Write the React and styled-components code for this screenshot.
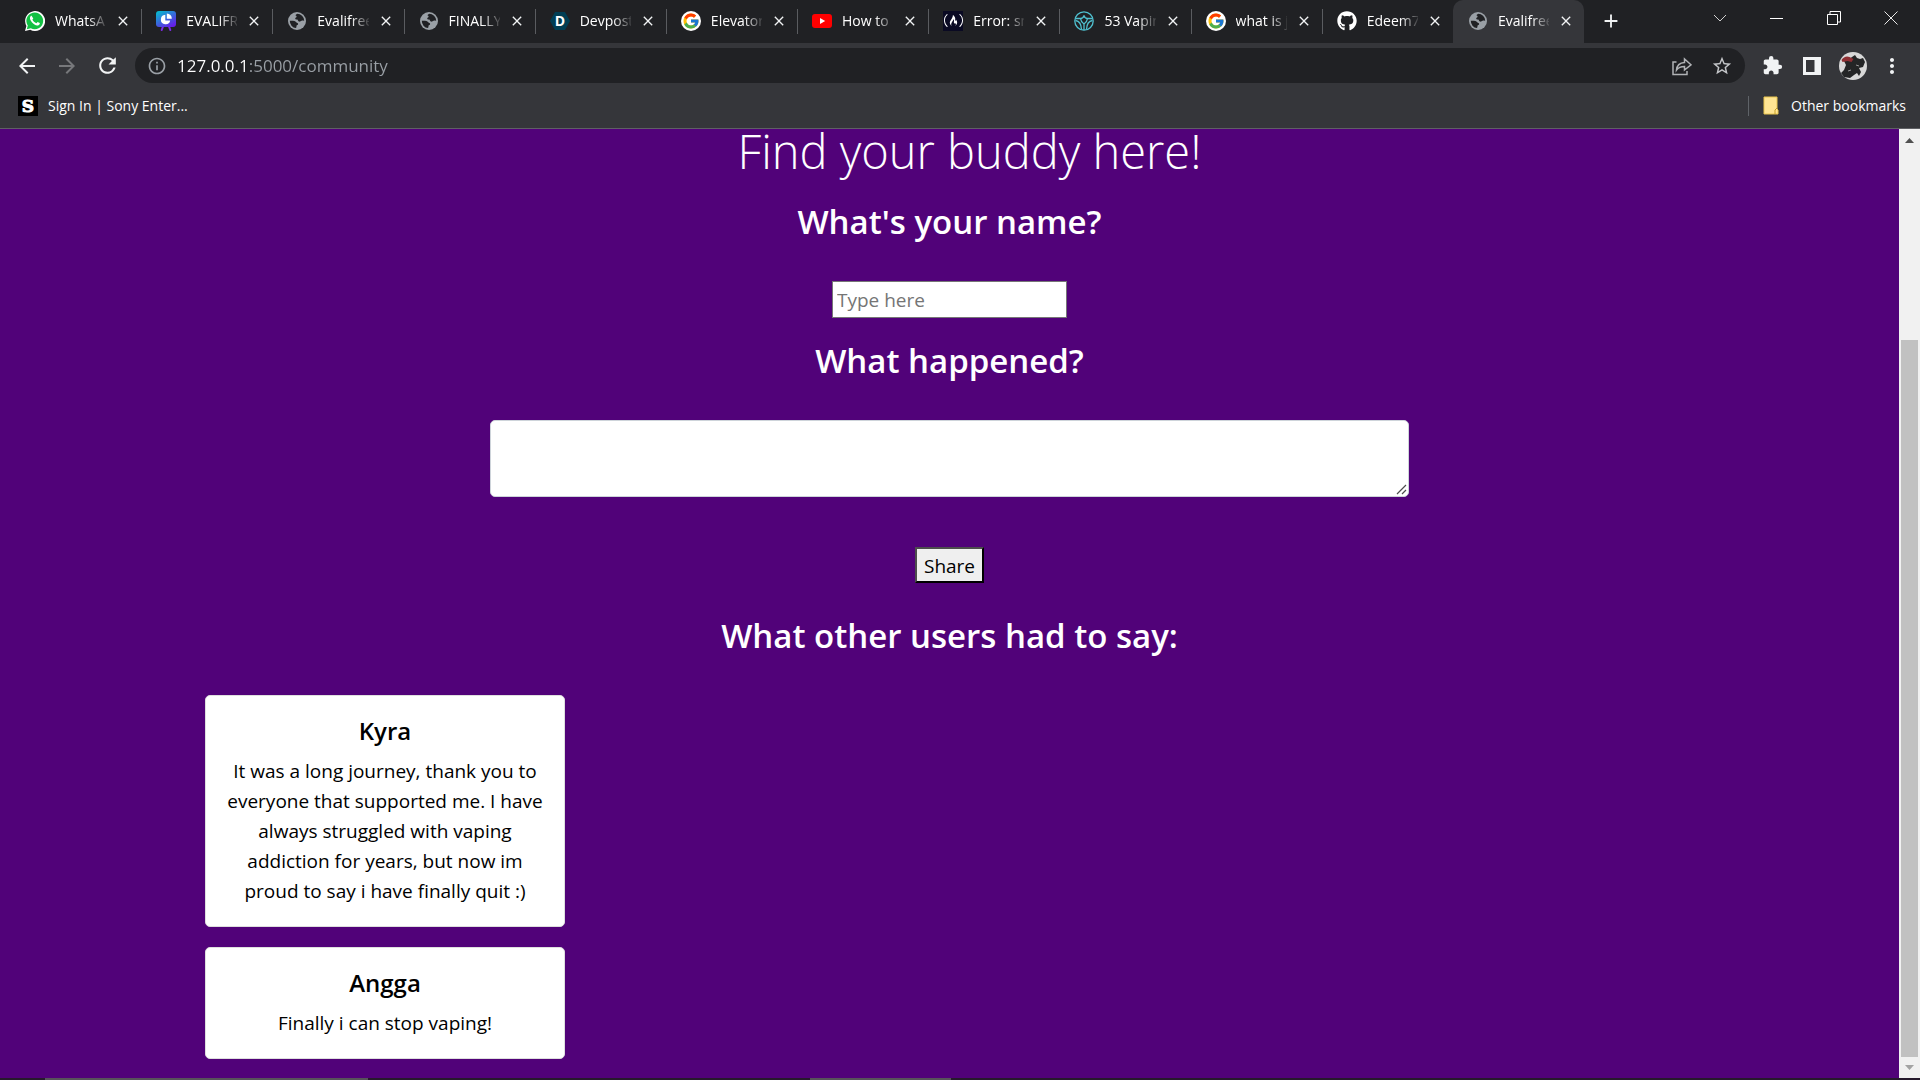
import React, { useState } from "react";
import styled, { createGlobalStyle } from "styled-components";
import {
  MdAdd,
  MdArrowBack,
  MdArrowForward,
  MdClose,
  MdExtension,
  MdInfoOutline,
  MdMoreVert,
  MdRefresh,
  MdStarOutline,
} from "react-icons/md";
import { FcGoogle } from "react-icons/fc";
import { FaGithub } from "react-icons/fa";
import { SiFreecodecamp } from "react-icons/si";

const GlobalStyle = createGlobalStyle`
  * {
    box-sizing: border-box;
  }
  body {
    margin: 0;
    background-color: #510279;
    font-family: "Open Sans", "Noto Sans", sans-serif;
  }
  button, input, textarea {
    font-family: inherit;
  }
`;
const Window = styled.div`
  display: flex;
  flex-direction: column;
  min-height: 100vh;
`;
const IconButton = styled.button`
  display: flex;
  align-items: center;
  justify-content: center;
  flex: none;
  width: ${(props) => props.$width || 40}px;
  height: ${(props) => props.$height || 34}px;
  padding: 0;
  border: none;
  background: none;
  color: ${(props) => props.$color || "#f1f3f4"};
`;

/* tab strip */
const TabStrip = styled.div`
  display: flex;
  height: 43px;
  padding-left: 10px;
  background-color: #202124;
`;
const TabList = styled.div`
  display: flex;
  flex: 1;
  min-width: 0;
`;
const Tab = styled.div`
  position: relative;
  display: flex;
  align-items: center;
  flex: 1;
  min-width: 0;
  padding: 0 1px 2px 15px;
  border-radius: 10px 10px 0 0;
  background-color: ${(props) => (props.$active ? "#35363a" : "transparent")};

  &::after {
    content: "";
    position: absolute;
    right: -1px;
    top: 9px;
    width: 1px;
    height: 25px;
    background-color: ${(props) => (props.$divider ? "#5a5c60" : "transparent")};
  }
`;
const TabButton = styled.button`
  display: flex;
  align-items: center;
  gap: 10px;
  flex: 1;
  min-width: 0;
  padding: 0;
  border: none;
  background: none;
  color: #fff;
`;
const TabTitle = styled.span`
  flex: 1;
  min-width: 0;
  overflow: hidden;
  white-space: nowrap;
  text-align: left;
  font-size: 14px;
  line-height: 20px;
  mask-image: linear-gradient(to right, #000 65%, transparent 105%);
`;
const Favicon = styled.svg`
  flex: none;
  width: 20px;
  height: 20px;
`;
const RoundIcon = styled.span`
  display: flex;
  align-items: center;
  justify-content: center;
  flex: none;
  width: 20px;
  height: 20px;
  border-radius: ${(props) => props.$radius || "50%"};
  background-color: ${(props) => props.$background || "transparent"};
  color: #fff;
`;
const WindowControls = styled.div`
  display: flex;
  justify-content: space-between;
  width: 336px;
`;
const WindowButtons = styled.div`
  display: flex;
  margin-top: 1px;
`;

/* toolbar and bookmarks */
const Toolbar = styled.div`
  display: flex;
  align-items: center;
  height: 45px;
  padding: 0 9px 0 7px;
  background-color: #35363a;
`;
const AddressBar = styled.div`
  display: flex;
  align-items: center;
  flex: 1;
  height: 35px;
  margin: 0 7px 0 8px;
  padding: 0 3px 0 12px;
  border-radius: 18px;
  background-color: #202124;
  color: #9aa0a6;
`;
const Address = styled.input`
  flex: 1;
  min-width: 0;
  margin-left: 10px;
  padding: 0;
  border: none;
  outline: none;
  background: linear-gradient(to right, #fff 70px, #9aa0a6 70px);
  background-clip: text;
  color: transparent;
  font-size: 17px;
  line-height: 28px;
`;
const BookmarkBar = styled.nav`
  display: flex;
  align-items: center;
  justify-content: space-between;
  height: 41px;
  padding: 0 14px 5px 18px;
  border-bottom: 1px solid #5f6064;
  background-color: #35363a;
`;
const Bookmark = styled.a`
  display: flex;
  align-items: center;
  gap: ${(props) => props.$gap || 10}px;
  color: #fff;
  font-size: 14px;
  line-height: 20px;
  text-decoration: none;
`;
const OtherBookmarks = styled.div`
  display: flex;
  padding-left: 14px;
  border-left: 1px solid #5f6368;
`;

/* page */
const Viewport = styled.div`
  display: flex;
  flex: 1;
`;
const Page = styled.main`
  flex: 1;
  min-width: 0;
  padding-bottom: 19px;
  background-color: #510279;
  color: #fff;
  text-align: center;
`;
const Title = styled.h1`
  margin: 0 0 28px;
  padding-left: 40px;
  font-size: 47px;
  font-weight: 300;
  line-height: 44px;
`;
const Question = styled.h2`
  margin: 0 0 38px;
  font-size: 33px;
  font-weight: 600;
  line-height: 42px;
`;
const Form = styled.form`
  display: flex;
  flex-direction: column;
  align-items: center;
`;
const NameInput = styled.input`
  width: 235px;
  height: 37px;
  margin-bottom: 22px;
  padding: 1px 4px;
  border: 1px solid #767676;
  background-color: #fff;
  font-size: 19px;

  &::placeholder {
    color: #757575;
  }
`;
const StoryField = styled.div`
  position: relative;
  width: 919px;
  max-width: 90%;
  margin-bottom: 50px;
`;
const Story = styled.textarea`
  display: block;
  width: 100%;
  height: 77px;
  padding: 8px 15px;
  border: 1px solid #ced4da;
  border-radius: 5px;
  background-color: #fff;
  font-size: 19px;
  resize: vertical;

  &::-webkit-resizer {
    display: none;
  }
`;
const Grip = styled.svg`
  position: absolute;
  right: 2px;
  bottom: 2px;
  pointer-events: none;
`;
const ShareButton = styled.button`
  height: 36px;
  margin-bottom: 32px;
  padding: 1px 7px 0;
  border: 2px solid;
  border-color: #4d4d4d #000 #000 #4d4d4d;
  background-color: #efefef;
  color: #000;
  font-size: 19px;
  line-height: 30px;
`;
const Posts = styled.section`
  display: flex;
  flex-direction: column;
  gap: 20px;
  max-width: 1489px;
  margin: 0 auto;
`;
const Card = styled.article`
  width: 360px;
  padding: 20px;
  border: 1px solid #dfdfdf;
  border-radius: 5px;
  background-color: #fff;
  color: #000;
`;
const Author = styled.h3`
  margin: 0 0 10px;
  font-size: 24px;
  font-weight: 600;
  line-height: 30px;
`;
const Message = styled.p`
  margin: 0;
  font-size: 19px;
  line-height: 30px;
`;

const Scrollbar = styled.div`
  display: flex;
  flex-direction: column;
  align-items: center;
  width: 21px;
  background-color: #f1f1f1;
`;
const ScrollArrow = styled.svg`
  flex: none;
  width: 21px;
  height: 21px;
`;
const ScrollGap = styled.div`
  flex: 190;
`;
const ScrollThumb = styled.div`
  flex: 718;
  width: 17px;
  background-color: #c1c1c1;
`;
const Taskbar = styled.footer`
  display: flex;
  gap: 442px;
  height: 2px;
  padding-left: 45px;
  background-color: #261a2c;
`;
const TaskItem = styled.div`
  width: ${(props) => props.$width}px;
  background-color: #57535a;
`;

const GlobeIcon = () => (
  <Favicon viewBox="0 0 20 20">
    <circle cx="10" cy="10" r="9" fill="#9aa0a6" />
    <path
      d="M10.2 2.8c-.9.5-1.700 1-1.500 1.700.2.700 1 .5.9 1.300-.1.800-1.400.7-1.400 1.700 0 .9.7 1 1.500 1 .9 0 1.200.5 1.300 1.100.2.900 1.100 1.200 2 1 .9-.3 1.200-1.100 2.200-1.100.7 0 1.300.3 2 .2a7.200 7.200 0 0 0-7-6.900z"
      fill="#202124"
    />
    <path
      d="M2.800 9.800c1.500-.1 3.500 0 4.700.3 1.300.4 1.400 1.300 2.300 1.600.9.400 1.500.6 1.300 1.500-.2.8-1.200.7-1.500 1.400-.3.800.1 1.600-.6 2.500A7.200 7.200 0 0 1 2.800 9.800z"
      fill="#202124"
    />
  </Favicon>
);
const WhatsappIcon = () => (
  <Favicon viewBox="0 0 20 20">
    <path d="M0 20l1.400-5.100A10 10 0 1 1 5.200 18.700z" fill="#fff" />
    <path d="M1.800 18.200l1-3.600a8.400 8.400 0 1 1 3 2.700z" fill="#12c143" />
    <path
      d="M6.900 5.200c-.3-.5-.9-.4-1.300.1-1.300 1.500-.6 3.600 1.300 5.900 2 2.400 4.600 4 6.600 3 1-.5 1.500-1.400 1.300-2.200l-2.200-1.100-1.200 1.300c-1.900-.7-3.200-1.900-4-3.600l.9-1.200z"
      fill="#fff"
    />
  </Favicon>
);
const PresentationIcon = () => (
  <Favicon viewBox="0 0 20 20">
    <defs>
      <linearGradient id="board" x1="0" y1="0" x2="0.7" y2="1">
        <stop offset="0" stopColor="#00c4cc" />
        <stop offset="1" stopColor="#6420e8" />
      </linearGradient>
    </defs>
    <path d="M7 15.500L5.700 19M13 15.500l1.300 3.500" stroke="#7d2ae8" strokeWidth="2" strokeLinecap="round" />
    <rect width="20" height="16" rx="3" fill="url(#board)" />
    <path d="M9.300 3.800a4.700 4.700 0 1 0 4.900 5.600H9.300z" fill="#fff" />
    <path d="M10.800 2.400v5.400h5a5 5 0 0 0-5-5.400z" fill="#fff" />
  </Favicon>
);
const DevpostIcon = () => (
  <Favicon viewBox="0 0 20 20">
    <path d="M5 1h10l5 9-5 9H5l-5-9z" fill="#003e54" />
    <text x="10" y="15" textAnchor="middle" fontSize="14" fontWeight="700" fill="#fff">
      D
    </text>
  </Favicon>
);
const GoogleIcon = () => (
  <RoundIcon $background="#fff">
    <FcGoogle size={18} />
  </RoundIcon>
);
const YoutubeIcon = () => (
  <Favicon viewBox="0 0 20 20">
    <rect y="3" width="20" height="14" rx="3" fill="#f00" />
    <path d="M8 7l5.200 3L8 13z" fill="#fff" />
  </Favicon>
);
const FreeCodeCampIcon = () => (
  <RoundIcon $background="#0a0a23" $radius="0">
    <SiFreecodecamp size={19} />
  </RoundIcon>
);
const WheelIcon = () => (
  <Favicon viewBox="0 0 20 20" fill="none" stroke="#4fc0cf" strokeWidth="1.300">
    <circle cx="10" cy="10" r="9.200" />
    <path d="M1.200 7.500h5.300c1.800 0 3-1 3.500-3 .5 2 1.700 3 3.500 3h5.300" />
    <path d="M6.500 7.500c.3 2.500 1.500 4.200 3.500 5.500 2-1.300 3.200-3 3.500-5.500M10 13v6" />
    <path d="M1.500 9.500c3.500.5 5.800 3.500 6 9M18.500 9.500c-3.500.5-5.800 3.500-6 9" />
  </Favicon>
);
const GithubIcon = () => (
  <RoundIcon>
    <FaGithub size={20} />
  </RoundIcon>
);

const tabs = [
  { title: "WhatsA", Icon: WhatsappIcon },
  { title: "EVALIFR", Icon: PresentationIcon },
  { title: "Evalifree", Icon: GlobeIcon },
  { title: "FINALLY", Icon: GlobeIcon },
  { title: "Devpost", Icon: DevpostIcon },
  { title: "Elevator", Icon: GoogleIcon },
  { title: "How to", Icon: YoutubeIcon },
  { title: "Error: sm", Icon: FreeCodeCampIcon },
  { title: "53 Vapin", Icon: WheelIcon },
  { title: "what is j", Icon: GoogleIcon },
  { title: "Edeem7", Icon: GithubIcon },
  { title: "Evalifree", Icon: GlobeIcon },
];

const initialPosts = [
  {
    author: "Kyra",
    message:
      "It was a long journey, thank you to everyone that supported me. I have always struggled with vaping addiction for years, but now im proud to say i have finally quit :)",
  },
  { author: "Angga", message: "Finally i can stop vaping!" },
];

const BrowserTabs = () => {
  const active = tabs.length - 1;

  return (
    <TabStrip>
      <TabList>
        {tabs.map(({ title, Icon }, index) => (
          <Tab key={index} $active={index === active} $divider={index < active - 1}>
            <TabButton>
              <Icon />
              <TabTitle>{title}</TabTitle>
            </TabButton>
            <IconButton $width={34} aria-label="Close tab">
              <MdClose size={16} />
            </IconButton>
          </Tab>
        ))}
      </TabList>
      <WindowControls>
        <IconButton $width={54} $height={42} aria-label="New tab">
          <MdAdd size={22} />
        </IconButton>
        <WindowButtons>
          <IconButton $width={57} aria-label="Search tabs">
            <svg width="14" height="14" fill="none" stroke="#d0d0d0">
              <path d="M1 4l6 6 6-6" />
            </svg>
          </IconButton>
          <IconButton $width={57} aria-label="Minimize">
            <svg width="14" height="14" fill="none" stroke="#fff">
              <path d="M0 7.500h13" />
            </svg>
          </IconButton>
          <IconButton $width={57} aria-label="Restore">
            <svg width="14" height="14" fill="none" stroke="#fff">
              <path d="M.5 3.500h10v10H.5zM3 3V.5h10.500V11H11" />
            </svg>
          </IconButton>
          <IconButton $width={58} aria-label="Close">
            <svg width="14" height="14" fill="none" stroke="#e8e8e8">
              <path d="M.5.5l13 13M13.500.5l-13 13" />
            </svg>
          </IconButton>
        </WindowButtons>
      </WindowControls>
    </TabStrip>
  );
};

const BrowserToolbar = () => (
  <Toolbar>
    <IconButton aria-label="Back">
      <MdArrowBack size={24} />
    </IconButton>
    <IconButton $color="#77787b" aria-label="Forward">
      <MdArrowForward size={24} />
    </IconButton>
    <IconButton aria-label="Reload">
      <MdRefresh size={25} />
    </IconButton>
    <AddressBar>
      <MdInfoOutline size={20} />
      <Address aria-label="Address" defaultValue="127.0.0.1:5000/community" />
      <IconButton $color="#b0b2b5" aria-label="Share page">
        <svg width="20" height="20" fill="none" stroke="currentColor" strokeWidth="1.500">
          <path d="M4.500 6H1v12.500h14V15" />
          <path d="M4.500 14c.4-4.500 3-7.200 8-7.500V3L19 8.800 12.500 14v-3.500c-3.800 0-6.200 1-8 3.500z" />
        </svg>
      </IconButton>
      <IconButton $color="#c4c6c9" aria-label="Bookmark this page">
        <MdStarOutline size={22} />
      </IconButton>
    </AddressBar>
    <IconButton aria-label="Extensions">
      <MdExtension size={21} />
    </IconButton>
    <IconButton aria-label="Side panel">
      <svg width="18" height="18">
        <path d="M0 0h18v18H0zM3 3v12h8.500V3z" fill="#f1f3f4" fillRule="evenodd" />
      </svg>
    </IconButton>
    <IconButton $width={41} aria-label="Profile">
      <svg width="28" height="28" viewBox="0 0 28 28">
        <circle cx="14" cy="14" r="14" fill="#d8d8d8" />
        <path
          d="M13 5l3-2 2 3 3 1 3-1 2 4-2 5-4 1 2 4-2 4-2-3-3 2-4 3-6-1-3-4 3-3 2-5-2-4 4-1z"
          fill="#242526"
        />
        <path d="M2.500 8c2-3 5-4.500 8-3l4 2-2 3-4-1-5 1z" fill="#8f2f33" />
        <path d="M9 19l3-1M17 13l3 1" stroke="#999" />
      </svg>
    </IconButton>
    <IconButton $width={38} aria-label="Menu">
      <MdMoreVert size={24} />
    </IconButton>
  </Toolbar>
);

const Bookmarks = () => (
  <BookmarkBar>
    <Bookmark href="#">
      <Favicon viewBox="0 0 20 20">
        <rect width="20" height="20" />
        <text
          x="10"
          y="16"
          textAnchor="middle"
          fontFamily="DejaVu Serif"
          fontSize="17"
          fontWeight="700"
          fill="#fff"
          stroke="#fff"
        >
          S
        </text>
      </Favicon>
      Sign In | Sony Enter...
    </Bookmark>
    <OtherBookmarks>
      <Bookmark href="#" $gap={12}>
        <svg width="16" height="19">
          <path d="M1 1h13v12l1 1v4H1z" fill="#ffe593" stroke="#eac54f" />
          <path d="M12 18v-4l2-2" fill="none" stroke="#c9a227" />
        </svg>
        Other bookmarks
      </Bookmark>
    </OtherBookmarks>
  </BookmarkBar>
);

const App = () => {
  const [posts, setPosts] = useState(initialPosts);
  const [name, setName] = useState("");
  const [story, setStory] = useState("");

  const handleSubmit = (e) => {
    e.preventDefault();
    if (!name || !story) return;
    setPosts([...posts, { author: name, message: story }]);
    setName("");
    setStory("");
  };

  return (
    <Window>
      <GlobalStyle />
      <BrowserTabs />
      <BrowserToolbar />
      <Bookmarks />
      <Viewport>
        <Page>
          <Title>Find your buddy here!</Title>
          <Form onSubmit={handleSubmit}>
            <Question>
              <label htmlFor="name">What's your name?</label>
            </Question>
            <NameInput
              id="name"
              placeholder="Type here"
              value={name}
              onChange={(e) => setName(e.target.value)}
            />
            <Question>
              <label htmlFor="story">What happened?</label>
            </Question>
            <StoryField>
              <Story id="story" value={story} onChange={(e) => setStory(e.target.value)} />
              <Grip width="11" height="11" stroke="#4d4d4d" strokeWidth="1.200">
                <path d="M1 10l9-9M6 10l4-4" />
              </Grip>
            </StoryField>
            <ShareButton type="submit">Share</ShareButton>
          </Form>
          <Question>What other users had to say:</Question>
          <Posts>
            {posts.map((post, index) => (
              <Card key={index}>
                <Author>{post.author}</Author>
                <Message>{post.message}</Message>
              </Card>
            ))}
          </Posts>
        </Page>
        <Scrollbar>
          <ScrollArrow viewBox="0 0 21 21">
            <path d="M6 14h9l-4.500-5z" fill="#505050" />
          </ScrollArrow>
          <ScrollGap />
          <ScrollThumb />
          <ScrollArrow viewBox="0 0 21 21">
            <path d="M6 8h9l-4.500 5z" fill="#a3a3a3" />
          </ScrollArrow>
        </Scrollbar>
      </Viewport>
      <Taskbar>
        <TaskItem $width={323} />
        <TaskItem $width={141} />
      </Taskbar>
    </Window>
  );
};

export default App;
